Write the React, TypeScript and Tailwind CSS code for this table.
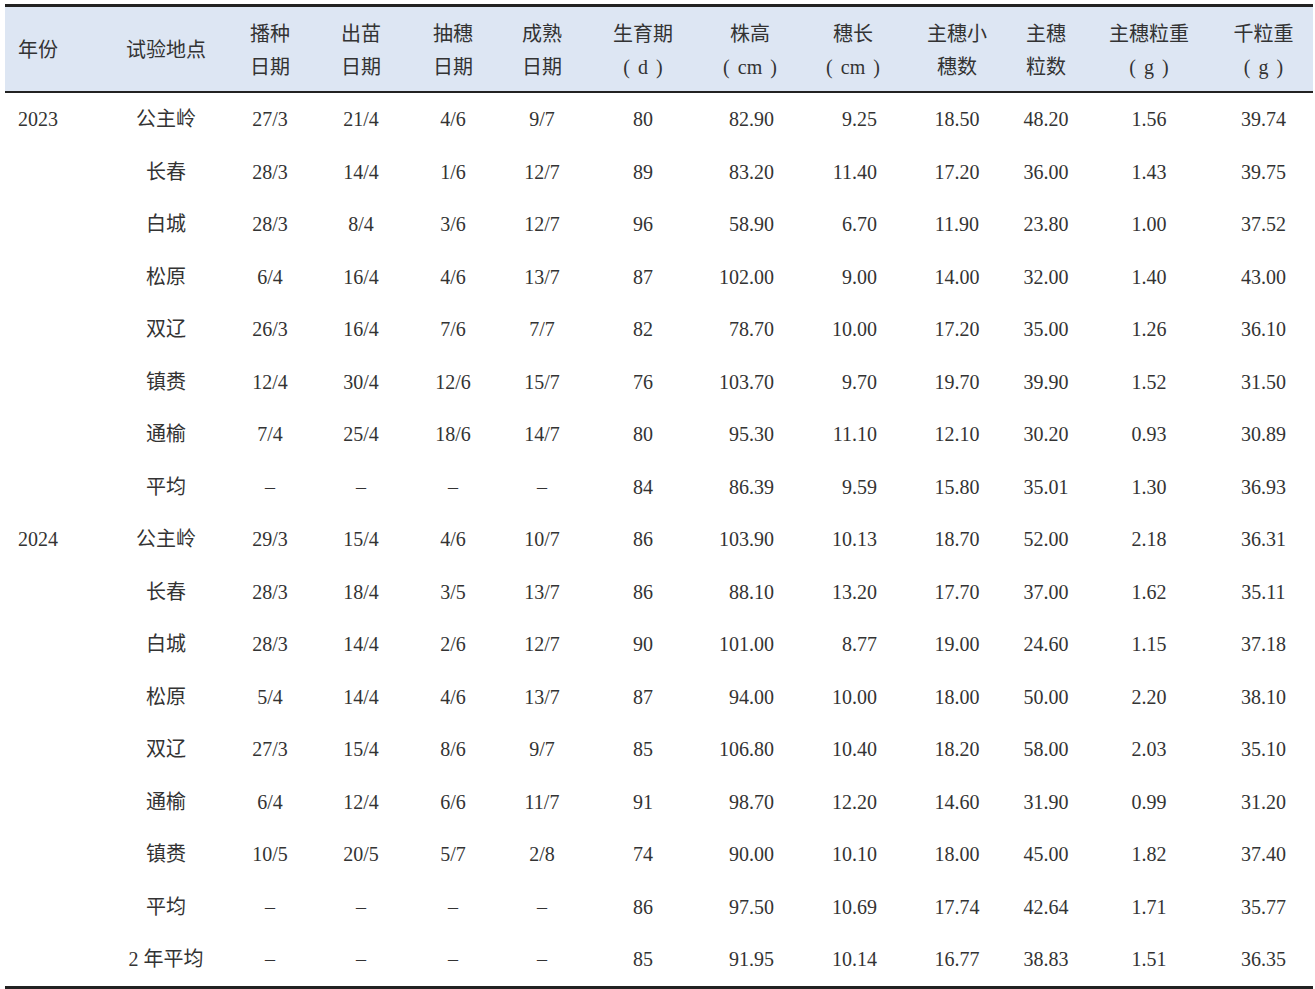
import React from "react";

type Row = { year?: string; site: string; v: string[] };

// second header line: [text, unit?] — units get wide parentheses like the printed table
const header: { top: string; bottom?: string; unit?: string }[] = [
  { top: "年份" },
  { top: "试验地点" },
  { top: "播种", bottom: "日期" },
  { top: "出苗", bottom: "日期" },
  { top: "抽穗", bottom: "日期" },
  { top: "成熟", bottom: "日期" },
  { top: "生育期", unit: "d" },
  { top: "株高", unit: "cm" },
  { top: "穗长", unit: "cm" },
  { top: "主穗小", bottom: "穗数" },
  { top: "主穗", bottom: "粒数" },
  { top: "主穗粒重", unit: "g" },
  { top: "千粒重", unit: "g" },
];

const rows: Row[] = [
  { year: "2023", site: "公主岭", v: ["27/3", "21/4", "4/6", "9/7", "80", "82.90", "9.25", "18.50", "48.20", "1.56", "39.74"] },
  { site: "长春", v: ["28/3", "14/4", "1/6", "12/7", "89", "83.20", "11.40", "17.20", "36.00", "1.43", "39.75"] },
  { site: "白城", v: ["28/3", "8/4", "3/6", "12/7", "96", "58.90", "6.70", "11.90", "23.80", "1.00", "37.52"] },
  { site: "松原", v: ["6/4", "16/4", "4/6", "13/7", "87", "102.00", "9.00", "14.00", "32.00", "1.40", "43.00"] },
  { site: "双辽", v: ["26/3", "16/4", "7/6", "7/7", "82", "78.70", "10.00", "17.20", "35.00", "1.26", "36.10"] },
  { site: "镇赉", v: ["12/4", "30/4", "12/6", "15/7", "76", "103.70", "9.70", "19.70", "39.90", "1.52", "31.50"] },
  { site: "通榆", v: ["7/4", "25/4", "18/6", "14/7", "80", "95.30", "11.10", "12.10", "30.20", "0.93", "30.89"] },
  { site: "平均", v: ["–", "–", "–", "–", "84", "86.39", "9.59", "15.80", "35.01", "1.30", "36.93"] },
  { year: "2024", site: "公主岭", v: ["29/3", "15/4", "4/6", "10/7", "86", "103.90", "10.13", "18.70", "52.00", "2.18", "36.31"] },
  { site: "长春", v: ["28/3", "18/4", "3/5", "13/7", "86", "88.10", "13.20", "17.70", "37.00", "1.62", "35.11"] },
  { site: "白城", v: ["28/3", "14/4", "2/6", "12/7", "90", "101.00", "8.77", "19.00", "24.60", "1.15", "37.18"] },
  { site: "松原", v: ["5/4", "14/4", "4/6", "13/7", "87", "94.00", "10.00", "18.00", "50.00", "2.20", "38.10"] },
  { site: "双辽", v: ["27/3", "15/4", "8/6", "9/7", "85", "106.80", "10.40", "18.20", "58.00", "2.03", "35.10"] },
  { site: "通榆", v: ["6/4", "12/4", "6/6", "11/7", "91", "98.70", "12.20", "14.60", "31.90", "0.99", "31.20"] },
  { site: "镇赉", v: ["10/5", "20/5", "5/7", "2/8", "74", "90.00", "10.10", "18.00", "45.00", "1.82", "37.40"] },
  { site: "平均", v: ["–", "–", "–", "–", "86", "97.50", "10.69", "17.74", "42.64", "1.71", "35.77"] },
  { site: "2 年平均", v: ["–", "–", "–", "–", "85", "91.95", "10.14", "16.77", "38.83", "1.51", "36.35"] },
];

const cols =
  "grid grid-cols-[95px_132px_76px_106px_78px_100px_102px_112px_94px_114px_64px_142px_93px]";

// alignment per value column (index 0 = 播种日期)
const valueCls = [
  "text-center",
  "text-center",
  "text-center",
  "text-center",
  "text-center",
  "text-right pr-[32px]",
  "text-right pr-[23px]",
  "text-center",
  "text-center",
  "text-center",
  "text-center pr-[6px]",
];

const font = {
  fontFamily: '"Liberation Serif", "Noto Sans CJK SC", serif',
};

const App: React.FC = () => {
  return (
    <div className="bg-white w-[1315px] h-[989px] pt-[4px] pl-[5px] text-[#333333]" style={font}>
      <div className="w-[1308px]">
        <div className={`${cols} bg-[#dde6f3] border-t-[3px] border-b-[2px] border-[#222222] h-[89px] pt-[3px] text-[20px]`}>
          {header.map((h, i) => (
            <div
              key={i}
              className={`flex flex-col justify-center leading-[33px] ${
                i === 0 ? "items-start pl-[13px]" : i === 12 ? "items-center pr-[6px]" : "items-center"
              }`}
            >
              <span>{h.top}</span>
              {h.bottom && <span>{h.bottom}</span>}
              {h.unit && (
                <span className="flex items-center">
                  <span>(</span>
                  <span className="mx-[8px]">{h.unit}</span>
                  <span>)</span>
                </span>
              )}
            </div>
          ))}
        </div>

        <div className="border-b-[4px] border-[#222222]">
          {rows.map((r, ri) => (
            <div key={ri} className={`${cols} h-[52.5px] items-center text-[20px]`}>
              <div className="pl-[13px]">{r.year ?? ""}</div>
              <div className="text-center">{r.site}</div>
              {r.v.map((v, i) => (
                <div key={i} className={valueCls[i]}>
                  {v}
                </div>
              ))}
            </div>
          ))}
        </div>
      </div>
    </div>
  );
};

export default App;
